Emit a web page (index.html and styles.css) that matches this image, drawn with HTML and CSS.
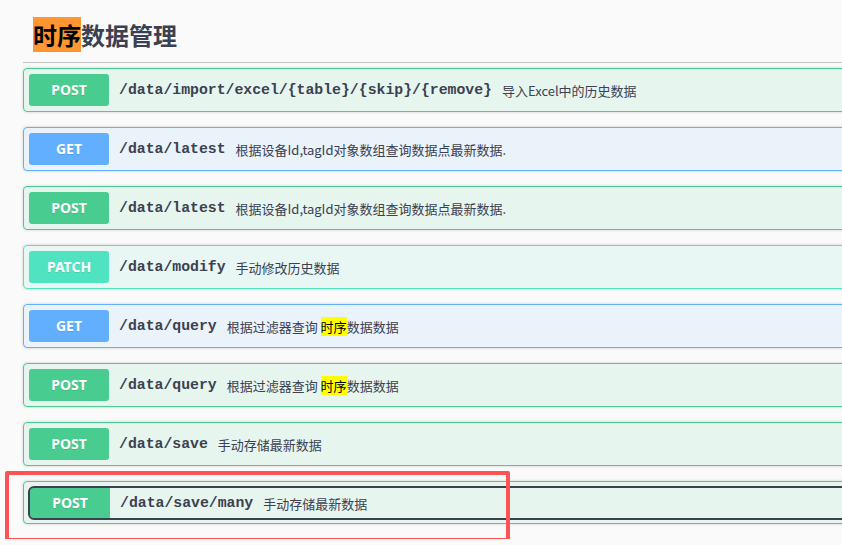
FILE: index.html
```html
<!DOCTYPE html>
<html lang="zh-CN">
<head>
  <meta charset="UTF-8">
  <title>时序数据管理</title>
  <link rel="stylesheet" href="styles.css">
</head>
<body>
  <div class="wrapper">
    <h3 class="opblock-tag"><mark class="find">时序</mark>数据管理</h3>

    <div class="opblock post">
      <div class="summary">
        <span class="method">POST</span>
        <span class="path">/data/import/excel/{table}/{skip}/{remove}</span>
        <span class="desc">导入Excel中的历史数据</span>
      </div>
    </div>

    <div class="opblock get">
      <div class="summary">
        <span class="method">GET</span>
        <span class="path">/data/latest</span>
        <span class="desc">根据设备Id,tagId对象数组查询数据点最新数据.</span>
      </div>
    </div>

    <div class="opblock post">
      <div class="summary">
        <span class="method">POST</span>
        <span class="path">/data/latest</span>
        <span class="desc">根据设备Id,tagId对象数组查询数据点最新数据.</span>
      </div>
    </div>

    <div class="opblock patch">
      <div class="summary">
        <span class="method">PATCH</span>
        <span class="path">/data/modify</span>
        <span class="desc">手动修改历史数据</span>
      </div>
    </div>

    <div class="opblock get">
      <div class="summary">
        <span class="method">GET</span>
        <span class="path">/data/query</span>
        <span class="desc">根据过滤器查询 <mark class="hl">时序</mark>数据数据</span>
      </div>
    </div>

    <div class="opblock post">
      <div class="summary">
        <span class="method">POST</span>
        <span class="path">/data/query</span>
        <span class="desc">根据过滤器查询 <mark class="hl">时序</mark>数据数据</span>
      </div>
    </div>

    <div class="opblock post">
      <div class="summary">
        <span class="method">POST</span>
        <span class="path">/data/save</span>
        <span class="desc">手动存储最新数据</span>
      </div>
    </div>

    <div class="opblock post">
      <div class="summary focused">
        <span class="method">POST</span>
        <span class="path">/data/save/many</span>
        <span class="desc">手动存储最新数据</span>
      </div>
    </div>
  </div>

  <div class="annotation"></div>
</body>
</html>
```

FILE: styles.css
```css
html, body {
  overflow: hidden;
}
body {
  margin: 0;
  background: #fafafa;
  position: relative;
  color: #3b4151;
}
.wrapper {
  width: 900px;
  padding: 7px 0 0 23px;
}
.opblock-tag {
  margin: 0 0 5px;
  padding: 10px 20px 10px 10px;
  font-family: "Noto Sans CJK SC", sans-serif;
  font-size: 24px;
  font-weight: bold;
  line-height: normal;
  border-bottom: 1px solid rgba(59,65,81,0.3);
  color: #3b4151;
}
mark.find {
  background: #ff9632;
  color: #000;
}
mark.hl {
  background: #ffff00;
  color: #000;
}
.opblock {
  border: 1px solid #000;
  border-radius: 4px;
  margin-bottom: 15px;
  box-shadow: 0 0 3px rgba(0,0,0,0.19);
}
.summary {
  display: flex;
  align-items: center;
  margin: 5px;
}
.summary.focused {
  outline: 2px solid #3b4151;
  border-radius: 4px;
  margin: 6px 5px 5px 6px;
  height: 30px;
}
.method {
  min-width: 80px;
  padding: 6px 0;
  text-align: center;
  font-family: "Noto Sans", sans-serif;
  font-size: 14px;
  font-weight: bold;
  line-height: 20px;
  border-radius: 3px;
  color: #fff;
  text-shadow: 0 1px 0 rgba(0,0,0,0.1);
}
.focused .method {
  padding: 5px 0;
  border-radius: 3px 0 0 3px;
}
.path {
  padding: 0 10px;
  font-family: "Liberation Mono", monospace;
  font-size: 14.8px;
  font-weight: bold;
  color: #3b4151;
}
.desc {
  font-family: "Noto Sans CJK SC", sans-serif;
  font-size: 13px;
  color: #3b4151;
}
.post {
  border-color: #49cc90;
  background: rgba(73,204,144,0.1);
}
.post .method {
  background: #49cc90;
}
.get {
  border-color: #61affe;
  background: rgba(97,175,254,0.1);
}
.get .method {
  background: #61affe;
}
.patch {
  border-color: #50e3c2;
  background: rgba(80,227,194,0.1);
}
.patch .method {
  background: #50e3c2;
}
.annotation {
  position: absolute;
  left: 5px;
  top: 471px;
  width: 505px;
  height: 71px;
  box-sizing: border-box;
  border: 4px solid #ff5353;
  border-radius: 2px;
}
```
